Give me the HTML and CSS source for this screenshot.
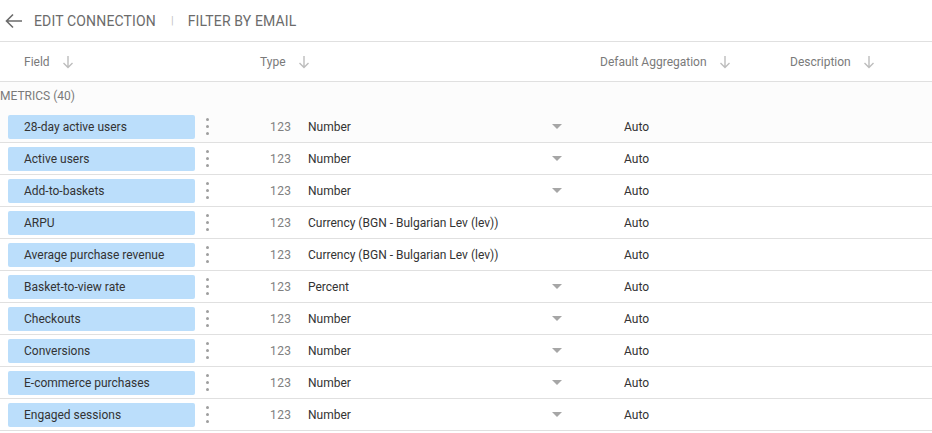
FILE: index.html
```html
<!DOCTYPE html>
<html lang="en">
<head>
    <meta charset="UTF-8">
    <meta name="viewport" content="width=device-width, initial-scale=1.0">
    <title>Edit connection</title>
    <link rel="stylesheet" href="styles.css">
</head>
<body>
    <!-- Top bar -->
    <div class="topbar">
        <svg class="back" width="18" height="18" viewBox="0 0 18 18">
            <path d="M17 9H1.5M8 2.5L1.5 9L8 15.5" fill="none" stroke="#6b6b6b" stroke-width="1.6"/>
        </svg>
        <span class="crumb">Edit connection</span>
        <span class="divider">|</span>
        <span class="crumb">Filter by email</span>
    </div>

    <!-- Column headers -->
    <div class="head row-grid">
        <div class="col col-field">Field <svg class="sort" width="12" height="14" viewBox="0 0 12 14"><path d="M6 1v11.5M1.5 8L6 12.5L10.5 8" fill="none" stroke="#bdbdbd" stroke-width="1.4"/></svg></div>
        <div class="col col-type">Type <svg class="sort" width="12" height="14" viewBox="0 0 12 14"><path d="M6 1v11.5M1.5 8L6 12.5L10.5 8" fill="none" stroke="#bdbdbd" stroke-width="1.4"/></svg></div>
        <div class="col col-agg">Default Aggregation <svg class="sort" width="12" height="14" viewBox="0 0 12 14"><path d="M6 1v11.5M1.5 8L6 12.5L10.5 8" fill="none" stroke="#bdbdbd" stroke-width="1.4"/></svg></div>
        <div class="col col-desc">Description <svg class="sort" width="12" height="14" viewBox="0 0 12 14"><path d="M6 1v11.5M1.5 8L6 12.5L10.5 8" fill="none" stroke="#bdbdbd" stroke-width="1.4"/></svg></div>
    </div>

    <div class="group">METRICS (40)</div>

    <div class="row row-grid first">
        <div class="field-cell"><span class="pill">28-day active users</span><span class="kebab"><i></i><i></i><i></i></span></div>
        <div class="type-cell"><span class="type-icon">123</span><span class="type-name">Number</span><span class="caret"></span></div>
        <div class="agg-cell">Auto</div>
        <div></div>
    </div>
    <div class="row row-grid">
        <div class="field-cell"><span class="pill">Active users</span><span class="kebab"><i></i><i></i><i></i></span></div>
        <div class="type-cell"><span class="type-icon">123</span><span class="type-name">Number</span><span class="caret"></span></div>
        <div class="agg-cell">Auto</div>
        <div></div>
    </div>
    <div class="row row-grid">
        <div class="field-cell"><span class="pill">Add-to-baskets</span><span class="kebab"><i></i><i></i><i></i></span></div>
        <div class="type-cell"><span class="type-icon">123</span><span class="type-name">Number</span><span class="caret"></span></div>
        <div class="agg-cell">Auto</div>
        <div></div>
    </div>
    <div class="row row-grid">
        <div class="field-cell"><span class="pill">ARPU</span><span class="kebab"><i></i><i></i><i></i></span></div>
        <div class="type-cell"><span class="type-icon">123</span><span class="type-name">Currency (BGN - Bulgarian Lev (lev))</span></div>
        <div class="agg-cell">Auto</div>
        <div></div>
    </div>
    <div class="row row-grid">
        <div class="field-cell"><span class="pill">Average purchase revenue</span><span class="kebab"><i></i><i></i><i></i></span></div>
        <div class="type-cell"><span class="type-icon">123</span><span class="type-name">Currency (BGN - Bulgarian Lev (lev))</span></div>
        <div class="agg-cell">Auto</div>
        <div></div>
    </div>
    <div class="row row-grid">
        <div class="field-cell"><span class="pill">Basket-to-view rate</span><span class="kebab"><i></i><i></i><i></i></span></div>
        <div class="type-cell"><span class="type-icon">123</span><span class="type-name">Percent</span><span class="caret"></span></div>
        <div class="agg-cell">Auto</div>
        <div></div>
    </div>
    <div class="row row-grid">
        <div class="field-cell"><span class="pill">Checkouts</span><span class="kebab"><i></i><i></i><i></i></span></div>
        <div class="type-cell"><span class="type-icon">123</span><span class="type-name">Number</span><span class="caret"></span></div>
        <div class="agg-cell">Auto</div>
        <div></div>
    </div>
    <div class="row row-grid">
        <div class="field-cell"><span class="pill">Conversions</span><span class="kebab"><i></i><i></i><i></i></span></div>
        <div class="type-cell"><span class="type-icon">123</span><span class="type-name">Number</span><span class="caret"></span></div>
        <div class="agg-cell">Auto</div>
        <div></div>
    </div>
    <div class="row row-grid">
        <div class="field-cell"><span class="pill">E-commerce purchases</span><span class="kebab"><i></i><i></i><i></i></span></div>
        <div class="type-cell"><span class="type-icon">123</span><span class="type-name">Number</span><span class="caret"></span></div>
        <div class="agg-cell">Auto</div>
        <div></div>
    </div>
    <div class="row row-grid">
        <div class="field-cell"><span class="pill">Engaged sessions</span><span class="kebab"><i></i><i></i><i></i></span></div>
        <div class="type-cell"><span class="type-icon">123</span><span class="type-name">Number</span><span class="caret"></span></div>
        <div class="agg-cell">Auto</div>
        <div></div>
    </div>
</body>
</html>
```

FILE: styles.css
```css
body {
    margin: 0;
    font-family: Roboto, "Liberation Sans", sans-serif;
    font-size: 12px;
    color: #333;
    background: #fff;
}

/* Top bar */
.topbar {
    display: flex;
    align-items: center;
    height: 41px;
    border-bottom: 1px solid #e0e0e0;
}

.back {
    margin-left: 5px;
    margin-right: 11px;
}

.crumb {
    font-size: 14px;
    text-transform: uppercase;
    color: #6b6b6b;
    letter-spacing: 0.15px;
}

.divider {
    margin: 0 14px 0 15px;
    color: #c4c4c4;
    font-size: 11px;
}

/* Shared column layout */
.row-grid {
    display: grid;
    grid-template-columns: 250px 350px 190px 1fr;
}

/* Column headers */
.head {
    height: 39px;
    border-bottom: 1px solid #e0e0e0;
    color: #7a7a7a;
}

.col {
    display: flex;
    align-items: center;
}

.col-field { padding-left: 24px; }
.col-type { padding-left: 10px; }

.sort {
    margin-left: 12px;
}

/* Group label */
.group {
    height: 29px;
    line-height: 28px;
    color: #7a7a7a;
    background: #fcfcfc;
}

/* Rows */
.row {
    height: 31px;
    border-bottom: 1px solid #e0e0e0;
}

.row.first {
    background: #fcfcfc;
}

.field-cell {
    display: flex;
    align-items: center;
}

.pill {
    box-sizing: border-box;
    width: 187px;
    height: 24px;
    line-height: 24px;
    margin-left: 8px;
    margin-top: 1px;
    padding-left: 16px;
    background: #bbdefb;
    border-radius: 2px;
    color: #333;
}

.kebab {
    display: flex;
    flex-direction: column;
    gap: 4px;
    margin-left: 11px;
}

.kebab i {
    width: 3px;
    height: 3px;
    border-radius: 50%;
    background: #9e9e9e;
}

.type-cell {
    display: flex;
    align-items: center;
    padding-left: 20px;
}

.type-icon {
    width: 38px;
    color: #808080;
    font-size: 12px;
    letter-spacing: 0.4px;
}

.type-name {
    color: #333;
}

.caret {
    margin-left: auto;
    margin-right: 38px;
    width: 0;
    height: 0;
    border-left: 5px solid transparent;
    border-right: 5px solid transparent;
    border-top: 5px solid #a6a6a6;
}

.agg-cell {
    display: flex;
    align-items: center;
    padding-left: 24px;
}
```
